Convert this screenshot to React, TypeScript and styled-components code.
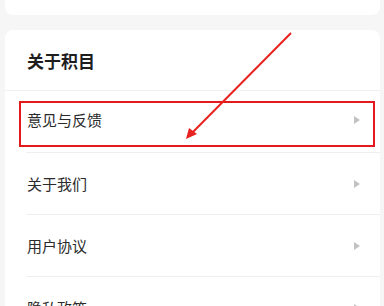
import styled, { createGlobalStyle } from "styled-components";

const GlobalStyle = createGlobalStyle`
  body {
    margin: 0;
    background-color: #f6f6f6;
    font-family: "Noto Sans CJK SC", "Noto Sans", sans-serif;
  }
`;

function SettingsAbout() {
  const rows = ["意见与反馈", "关于我们", "用户协议", "隐私政策"];

  return (
    <Page>
      <GlobalStyle />
      <TopCard />
      <Card>
        <CardHeader>关于积目</CardHeader>
        {rows.map((label, i) => (
          <Row key={label} $first={i === 0}>
            <RowText>{label}</RowText>
            <Chevron viewBox="0 0 6 8">
              <path d="M0 0 L6 4 L0 8 Z" fill="#c2c2c2" />
            </Chevron>
          </Row>
        ))}
        <HighlightBox />
      </Card>
      <Annotation viewBox="0 0 384 306">
        <line x1="291" y1="33" x2="190" y2="135" stroke="#e8221f" strokeWidth="2" />
        <path d="M186 139 L189 128 L197 134 Z" fill="#e8221f" />
      </Annotation>
    </Page>
  );
}

const Page = styled.div`
  position: relative;
  width: 384px;
  height: 306px;
  padding: 0 4px 0 5px;
  box-sizing: border-box;
  overflow: hidden;
`;

const TopCard = styled.div`
  height: 15px;
  background-color: #ffffff;
  border-radius: 0 0 8px 8px;
  margin-bottom: 15px;
`;

const Card = styled.div`
  position: relative;
  background-color: #ffffff;
  border-radius: 8px;
`;

const CardHeader = styled.div`
  height: 60px;
  display: flex;
  align-items: center;
  padding-left: 22px;
  font-size: 17px;
  font-weight: 700;
  color: #1e1e1e;
  border-bottom: 1px solid #f0f0f0;
`;

const Row = styled.div<{ $first: boolean }>`
  height: 62px;
  margin-left: 21px;
  padding-right: 20px;
  padding-bottom: ${(p) => (p.$first ? "4px" : "0")};
  box-sizing: border-box;
  display: flex;
  align-items: center;
  justify-content: space-between;
  border-bottom: 1px solid #efefef;
`;

const RowText = styled.span`
  padding-left: 1px;
  font-size: 15px;
  color: #2b2b2b;
`;

const Chevron = styled.svg`
  width: 6px;
  height: 8px;
`;

const HighlightBox = styled.div`
  position: absolute;
  left: 14px;
  top: 71px;
  width: 356px;
  height: 46px;
  border: 2px solid #e3191b;
  box-sizing: border-box;
  pointer-events: none;
`;

const Annotation = styled.svg`
  position: absolute;
  left: 0;
  top: 0;
  width: 384px;
  height: 306px;
  pointer-events: none;
`;

export default SettingsAbout;
